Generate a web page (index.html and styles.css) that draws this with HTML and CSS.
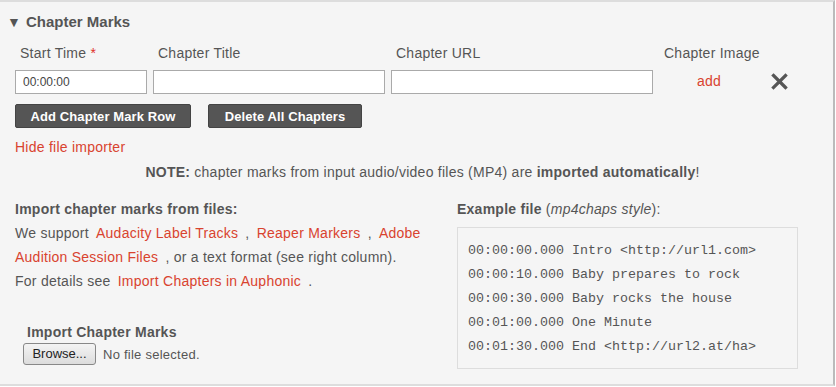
FILE: index.html
```html
<!DOCTYPE html>
<html lang="en">
<head>
    <meta charset="UTF-8">
    <title>Chapter Marks</title>
    <link rel="stylesheet" href="styles.css">
</head>
<body>
    <div class="panel">
        <h3 class="panel-title"><span class="caret">&#9660;</span>Chapter Marks</h3>

        <div class="chapter-grid">
            <div class="col-label">Start Time <span class="req">*</span></div>
            <div class="col-label">Chapter Title</div>
            <div class="col-label">Chapter URL</div>
            <div class="col-label">Chapter Image</div>
            <div></div>

            <input class="field" type="text" value="00:00:00">
            <input class="field" type="text">
            <input class="field" type="text">
            <a class="link image-add" href="#">add</a>
            <a class="remove" href="#" title="Remove">
                <svg width="17" height="17" viewBox="0 0 17 17">
                    <path d="M2.5 2.5 L14.5 14.5 M14.5 2.5 L2.5 14.5" stroke="#555" stroke-width="3.2" stroke-linecap="square" fill="none"/>
                </svg>
            </a>
        </div>

        <div class="actions">
            <button class="btn btn-add">Add Chapter Mark Row</button>
            <button class="btn btn-delete">Delete All Chapters</button>
        </div>

        <a class="link toggle" href="#">Hide file importer</a>

        <p class="note"><b>NOTE:</b> chapter marks from input audio/video files (MP4) are <b>imported automatically</b>!</p>

        <div class="importer">
            <div class="import-info">
                <h4 class="sub-title">Import chapter marks from files:</h4>
                <p class="text">We support <a class="link inline" href="#">Audacity Label Tracks</a> , <a class="link inline" href="#">Reaper Markers</a> , <a class="link inline" href="#">Adobe Audition Session Files</a> , or a text format (see right column).<br>For details see <a class="link inline" href="#">Import Chapters in Auphonic</a> .</p>

                <div class="upload">
                    <div class="upload-title">Import Chapter Marks</div>
                    <div class="file-input">
                        <span class="browse">Browse...</span>
                        <span class="file-name">No file selected.</span>
                    </div>
                </div>
            </div>
            <div class="example">
                <h4 class="sub-title"><b>Example file</b> <span class="light">(<i>mp4chaps style</i>):</span></h4>
                <pre class="code">00:00:00.000 Intro &lt;http://url1.com&gt;
00:00:10.000 Baby prepares to rock
00:00:30.000 Baby rocks the house
00:01:00.000 One Minute
00:01:30.000 End &lt;http://url2.at/ha&gt;</pre>
            </div>
        </div>
    </div>
</body>
</html>
```

FILE: styles.css
```css
body {
    margin: 0;
    background: #fff;
    font-family: "Liberation Sans", Arial, sans-serif;
    font-size: 14px;
    letter-spacing: 0.25px;
    color: #555;
}
.panel {
    width: 835px;
    height: 386px;
    box-sizing: border-box;
    background: #f5f5f5;
    border-top: 2px solid #ddd;
    border-right: 2px solid #bbb;
    border-bottom: 2px solid #ddd;
    padding: 10px 15px 0 15px;
}
.panel-title {
    margin: 0;
    font-size: 15px;
    line-height: 20px;
    font-weight: bold;
    color: #555;
    letter-spacing: 0;
}
.caret {
    display: inline-block;
    width: 12px;
    margin-left: -8px;
    margin-right: 7px;
    font-size: 14px;
    color: #555;
}
.chapter-grid {
    display: grid;
    grid-template-columns: 132px 232px 262px 100px 30px;
    column-gap: 6px;
    row-gap: 7px;
    margin-top: 11px;
    align-items: center;
}
.col-label {
    padding-left: 5px;
    line-height: 20px;
    white-space: nowrap;
}
.req {
    color: #e0302a;
}
.field {
    height: 24px;
    box-sizing: border-box;
    border: 1px solid #aaa;
    background: #fff;
    padding: 0 7px;
    font-family: "Liberation Sans", Arial, sans-serif;
    font-size: 12px;
    color: #444;
    outline: none;
}
.link {
    color: #d9432f;
    text-decoration: none;
}
.image-add {
    text-align: center;
    margin-top: -3px;
}
.remove {
    display: flex;
    padding-left: 6px;
    margin-top: -1px;
}
.actions {
    display: flex;
    gap: 17px;
    margin-top: 10px;
}
.btn {
    height: 24px;
    padding: 0;
    background: #555;
    color: #fff;
    border: 1px solid #444;
    border-radius: 2px;
    font-family: "Liberation Sans", Arial, sans-serif;
    font-size: 13px;
    font-weight: bold;
    letter-spacing: 0.1px;
}
.btn-add {
    width: 176px;
}
.btn-delete {
    width: 154px;
}
.toggle {
    display: block;
    width: max-content;
    margin-top: 9px;
    line-height: 20px;
}
.note {
    margin: 5px 0 0;
    padding-left: 12px;
    line-height: 20px;
    text-align: center;
}
.importer {
    display: grid;
    grid-template-columns: 426px 341px;
    column-gap: 16px;
    margin-top: 15px;
}
.sub-title {
    margin: 0;
    font-size: 14px;
    line-height: 24px;
    font-weight: bold;
}
.light {
    font-weight: normal;
}
.text {
    margin: 0;
    line-height: 24px;
}
.inline {
    padding: 0 3px;
}
.upload {
    margin-top: 27px;
    padding-left: 12px;
}
.upload-title {
    font-weight: bold;
    line-height: 24px;
}
.file-input {
    display: flex;
    align-items: center;
    gap: 7px;
    margin-left: -4px;
    margin-top: -1px;
}
.browse {
    box-sizing: border-box;
    height: 22px;
    width: 73px;
    border: 1px solid #888;
    border-radius: 3px;
    background: linear-gradient(#f4f4f4, #dcdcdc);
    color: #222;
    font-size: 13px;
    letter-spacing: 0;
    line-height: 20px;
    text-align: center;
}
.file-name {
    font-size: 13px;
}
.code {
    margin: 6px 0 0;
    height: 142px;
    box-sizing: border-box;
    border: 1px solid #ddd;
    padding: 11px 10px 0;
    font-family: "Liberation Mono", "Courier New", monospace;
    font-size: 13.33px;
    letter-spacing: 0;
    line-height: 24px;
    color: #555;
}
```
